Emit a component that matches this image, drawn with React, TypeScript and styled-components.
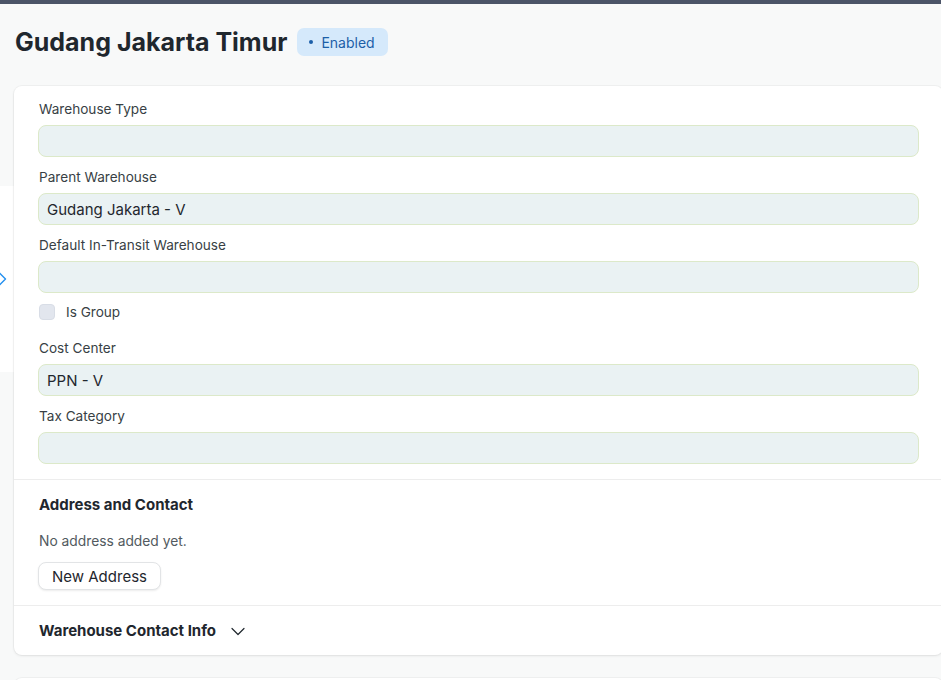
import styled, { createGlobalStyle } from 'styled-components';

const GlobalStyle = createGlobalStyle`
  html, body {
    margin: 0;
    padding: 0;
    background: #f8f9f9;
    overflow: hidden;
  }
  body {
    font-family: Inter, "Noto Sans", sans-serif;
    color: #1f272e;
  }
`;

const fields = [
  { label: 'Warehouse Type', value: '' },
  { label: 'Parent Warehouse', value: 'Gudang Jakarta - V' },
  { label: 'Default In-Transit Warehouse', value: '' },
];

const fields2 = [
  { label: 'Cost Center', value: 'PPN - V' },
  { label: 'Tax Category', value: '' },
];

export default function App() {
  return (
    <>
      <GlobalStyle />
      <TopBar />
      <Page>
        <SidebarPeek>
          <svg width="9" height="16" viewBox="0 0 9 16" fill="none">
            <path d="M1 1.5l6.5 6.5-6.5 6.5" stroke="#2490ef" strokeWidth="1.4" strokeLinecap="round" strokeLinejoin="round" />
          </svg>
        </SidebarPeek>
        <Header>
          <Title>Gudang Jakarta Timur</Title>
          <Badge>
            <Dot />
            Enabled
          </Badge>
        </Header>
        <Card>
          <Section>
            {fields.map((f) => (
              <Field key={f.label}>
                <Label>{f.label}</Label>
                <Input>{f.value}</Input>
              </Field>
            ))}
            <CheckRow>
              <CheckBox />
              <CheckLabel>Is Group</CheckLabel>
            </CheckRow>
            {fields2.map((f) => (
              <Field key={f.label}>
                <Label>{f.label}</Label>
                <Input>{f.value}</Input>
              </Field>
            ))}
          </Section>
          <Section $divided>
            <SectionTitle>Address and Contact</SectionTitle>
            <Muted>No address added yet.</Muted>
            <Button>New Address</Button>
          </Section>
          <Collapsible $divided>
            <SectionTitle>Warehouse Contact Info</SectionTitle>
            <svg width="16" height="16" viewBox="0 0 16 16" fill="none">
              <path d="M2 5.5l6 6 6-6" stroke="#1f272e" strokeWidth="1.2" strokeLinecap="round" strokeLinejoin="round" />
            </svg>
          </Collapsible>
        </Card>
        <NextCard />
      </Page>
    </>
  );
}

const TopBar = styled.div`
  height: 4px;
  background: #4c5568;
`;

const Page = styled.div`
  position: relative;
  padding: 0 0 0 14px;
`;

const SidebarPeek = styled.div`
  position: absolute;
  left: 0;
  top: 182px;
  width: 14px;
  height: 186px;
  background: #ffffff;
  display: flex;
  align-items: center;
  svg {
    margin-left: -2px;
  }
`;

const Header = styled.div`
  display: flex;
  align-items: center;
  gap: 10px;
  height: 82px;
  padding-left: 1px;
  padding-bottom: 6px;
  box-sizing: border-box;
`;

const Title = styled.h1`
  margin: 0;
  font-size: 25px;
  font-weight: 700;
  color: #1f272e;
`;

const Badge = styled.span`
  display: inline-flex;
  align-items: center;
  gap: 8px;
  height: 28px;
  padding: 0 13px 0 12px;
  border-radius: 7px;
  background: #d5e9fb;
  color: #1c5fa8;
  font-size: 14px;
`;

const Dot = styled.span`
  width: 4px;
  height: 4px;
  border-radius: 50%;
  background: #1c5fa8;
`;

const Card = styled.div`
  position: relative;
  width: 929px;
  background: #ffffff;
  border-radius: 8px;
  box-shadow: 0 0 0 1px rgba(0, 0, 0, 0.03), 0 1px 3px rgba(0, 0, 0, 0.08);
`;

const Section = styled.div<{ $divided?: boolean }>`
  padding: 15px 24px 15px;
  border-top: ${(p) => (p.$divided ? '1px solid #ededed' : 'none')};
`;

const Field = styled.div`
  display: flex;
  flex-direction: column;
  margin-bottom: 12px;
  &:last-child {
    margin-bottom: 0;
  }
`;

const Label = styled.label`
  font-size: 13.6px;
  line-height: 16px;
  color: #383f45;
  margin-bottom: 8px;
  padding-left: 1px;
`;

const Input = styled.div`
  height: 32px;
  box-sizing: border-box;
  border: 1px solid #dce9c9;
  border-radius: 8px;
  background: #eaf2f3;
  padding: 0 8px;
  display: flex;
  align-items: center;
  font-size: 15px;
  color: #1f272e;
`;

const CheckRow = styled.div`
  display: flex;
  align-items: center;
  gap: 11px;
  margin: -3px 0 18px 1px;
  height: 20px;
`;

const CheckBox = styled.span`
  width: 16px;
  height: 16px;
  box-sizing: border-box;
  border-radius: 4px;
  background: #e2e6ee;
  border: 1px solid #d8dde6;
`;

const CheckLabel = styled.span`
  font-size: 13.6px;
  color: #383f45;
`;

const SectionTitle = styled.div`
  font-size: 15px;
  font-weight: 700;
  color: #1f272e;
  line-height: 20px;
  padding-left: 1px;
`;

const Muted = styled.div`
  margin-top: 18px;
  font-size: 13.8px;
  line-height: 16px;
  color: #525a60;
  padding-left: 1px;
`;

const Button = styled.button`
  margin-top: 13px;
  height: 28px;
  padding: 0 13px;
  border: 1px solid #e2e4e6;
  border-radius: 8px;
  background: #ffffff;
  box-shadow: 0 1px 2px rgba(0, 0, 0, 0.08);
  font-family: Inter, "Noto Sans", sans-serif;
  font-size: 15px;
  color: #1f272e;
  display: block;
`;

const Collapsible = styled.div<{ $divided?: boolean }>`
  display: flex;
  align-items: center;
  gap: 14px;
  height: 49px;
  padding: 0 24px;
  border-top: ${(p) => (p.$divided ? '1px solid #ededed' : 'none')};
`;

const NextCard = styled.div`
  margin-top: 23px;
  width: 929px;
  height: 20px;
  background: #ffffff;
  border-radius: 8px;
  box-shadow: 0 0 0 1px rgba(0, 0, 0, 0.03), 0 1px 3px rgba(0, 0, 0, 0.08);
`;
